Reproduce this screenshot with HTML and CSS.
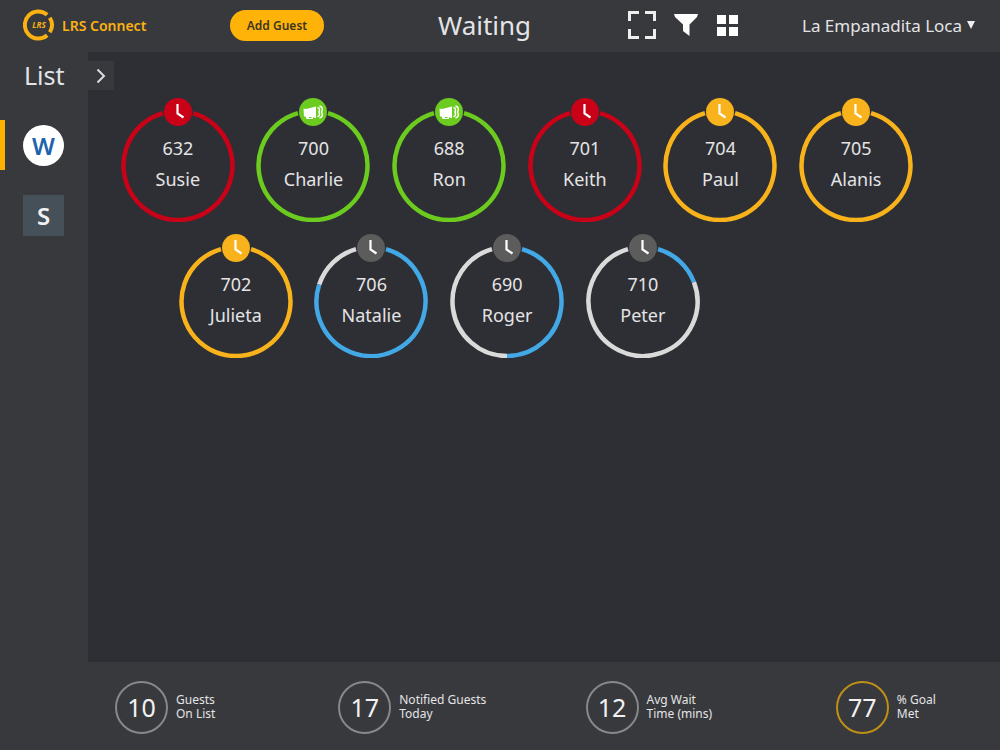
FILE: index.html
```html
<!DOCTYPE html>
<html lang="en">
<head>
    <meta charset="utf-8">
    <title>LRS Connect - Waiting</title>
    <link rel="stylesheet" href="styles.css">
</head>
<body>
    <!-- shared icons -->
    <svg class="defs" aria-hidden="true">
        <symbol id="clock" viewBox="0 0 28 28">
            <path d="M13.500 6v9.500l6 4" fill="none" stroke="#fff" stroke-width="2.200"/>
        </symbol>
        <symbol id="horn" viewBox="0 0 28 28">
            <path d="M4.500 10.500l2.500.5L17 8.500v11.500l-3-.7v1.700H7.500l-.8-2.500H5z" fill="#fff"/>
            <path d="M10 19.500h2.500" stroke="#6ccb1f" stroke-width="1"/>
            <path d="M18.500 9.500q3 .5 1.500 4.500 1.500 4-1.500 4.500M20.500 8q4.500 1.500 2 6 2.500 4.500-2 6" fill="none" stroke="#fff" stroke-width="1.500"/>
        </symbol>
    </svg>

    <header class="header">
        <a class="logo" href="#">
            <svg width="32" height="32" viewBox="0 0 32 32" aria-hidden="true">
                <path d="M24.200 5.800A13.500 13.500 0 1 0 24.200 26.200" fill="none" stroke="#fbb112" stroke-width="4"/>
                <path d="M26.800 8.800A13.500 13.500 0 0 1 26.800 23.200" fill="none" stroke="#fbb112" stroke-width="4"/>
                <text x="16" y="19" class="logo-mark">LRS</text>
            </svg>
            <span>LRS Connect</span>
        </a>
        <button class="add-guest" type="button">Add Guest</button>
        <h1>Waiting</h1>
        <div class="tools">
            <button type="button" aria-label="Full screen">
                <svg width="30" height="30" viewBox="0 0 30 30"><path d="M2.500 11V2.500H12M18 2.500h9.500V11M27.500 19v8.500H18M12 27.500H2.500V19" fill="none" stroke="#eee" stroke-width="3"/></svg>
            </button>
            <button type="button" aria-label="Filter">
                <svg width="24" height="24" viewBox="0 0 24 24"><path d="M0 1h24l-1 3-7.500 7.500V23L9 18v-6.500L1 4z" fill="#fff"/></svg>
            </button>
            <button type="button" aria-label="Grid view">
                <svg width="21" height="21" viewBox="0 0 21 21"><path d="M0 0h9v9H0zM12 0h9v9h-9zM0 12h9v9H0zM12 12h9v9h-9z" fill="#fff"/></svg>
            </button>
        </div>
        <div class="location">
            <select aria-label="Location">
                <option>La Empanadita Loca</option>
            </select>
            <svg width="8" height="8" viewBox="0 0 8 8" aria-hidden="true"><path d="M0 0h8L4 8z" fill="#eee"/></svg>
        </div>
    </header>

    <nav class="sidebar">
        <h2>List</h2>
        <div class="list-item active"><button class="waiting" type="button">W</button></div>
        <div class="list-item"><button class="seated" type="button">S</button></div>
    </nav>

    <main class="board">
        <button class="expand" type="button" aria-label="Expand list">
            <svg width="10" height="16" viewBox="0 0 10 16"><path d="M1.500 1.500L8 8l-6.500 6.500" fill="none" stroke="#ddd" stroke-width="2"/></svg>
        </button>
        <div class="guests" id="guests-top"></div>
        <div class="guests offset" id="guests-bottom"></div>
    </main>

    <footer class="stats">
        <div class="stat"><b>10</b><span>Guests<br>On List</span></div>
        <div class="stat"><b>17</b><span>Notified Guests<br>Today</span></div>
        <div class="stat"><b>12</b><span>Avg Wait<br>Time (mins)</span></div>
        <div class="stat goal"><b>77</b><span>% Goal<br>Met</span></div>
    </footer>
    <script src="script.js"></script>
</body>
</html>
```

FILE: styles.css
```css
* {
    box-sizing: border-box;
}
body {
    margin: 0;
    min-height: 100vh;
    display: grid;
    grid-template-columns: 88px 1fr;
    grid-template-rows: 52px 1fr 88px;
    background-color: #38393d;
    color: #e4e4e6;
    font-family: "Noto Sans", sans-serif;
}
button, select {
    font-family: inherit;
    color: inherit;
    border: none;
    background: none;
    padding: 0;
    cursor: pointer;
}
svg {
    display: block;
}
h1, h2 {
    margin: 0;
    font-weight: 400;
}
.defs {
    position: absolute;
    width: 0;
    height: 0;
}

/* header */
.header {
    grid-column: 1 / 3;
    display: flex;
    align-items: center;
    padding: 0 25px 2px 23px;
}
.logo {
    width: 207px;
    display: flex;
    align-items: center;
    gap: 7px;
    color: #fbb112;
    font-size: 14px;
    font-weight: 600;
    text-decoration: none;
}
.logo-mark {
    font-size: 8px;
    font-weight: 700;
    font-style: italic;
    text-anchor: middle;
    fill: #fbb112;
}
.add-guest {
    width: 94px;
    height: 31px;
    border-radius: 16px;
    background-color: #ffb309;
    color: #3c3524;
    font-size: 12px;
    font-weight: 600;
}
h1 {
    width: 189px;
    margin-left: 114px;
    font-size: 26px;
}
.tools {
    display: flex;
    align-items: center;
    gap: 19px;
}
.tools button:first-child {
    margin-right: -2px;
}
.location {
    margin-left: auto;
    display: flex;
    align-items: center;
    gap: 4px;
}
.location select {
    appearance: none;
    font-size: 17px;
}

/* sidebar */
.sidebar h2 {
    height: 48px;
    padding-left: 24px;
    font-size: 25px;
    line-height: 46px;
}
.list-item {
    height: 50px;
    margin-top: 20px;
    padding-left: 18px;
    border-left: 5px solid transparent;
    display: flex;
    align-items: center;
}
.list-item.active {
    border-color: #ffb000;
}
.list-item button {
    width: 41px;
    height: 41px;
    font-size: 24px;
    line-height: 41px;
    font-weight: 600;
}
.list-item .waiting {
    border-radius: 50%;
    background-color: #fff;
    color: #1c63ab;
}
.list-item .seated {
    background-color: #465059;
    color: #f2f2f2;
}

/* guest board */
.board {
    background-color: #2e2f34;
    padding: 9px 76px 0 22px;
}
.expand {
    width: 26px;
    height: 29px;
    margin-left: -22px;
    display: grid;
    place-items: center;
    background-color: #38393d;
}
.guests {
    display: grid;
    grid-template-columns: repeat(6, 1fr);
    margin-top: 8px;
}
.guests.offset {
    margin: 12px -58px 0 58px;
}
.guest {
    display: grid;
    justify-items: center;
    font-size: 18px;
    line-height: 31px;
}
.guest > svg, .guest > span {
    grid-area: 1 / 1;
}
.guest > span {
    padding-top: 35px;
}
.track, .progress {
    fill: none;
    stroke-width: 4.5;
}
.red {
    --color: #c90218;
}
.green {
    --color: #6ccb1f;
}
.yellow {
    --color: #f7b21c;
}
.blue {
    --color: #42a8e6;
}
.progress {
    stroke: var(--color);
}
.track {
    stroke: #dadada;
}
.badge {
    fill: var(--color);
}
.blue .badge {
    fill: #5c5c5c;
}

/* footer */
.stats {
    grid-column: 2;
    display: grid;
    grid-template-columns: 223fr 247fr 250fr 164fr;
    align-items: center;
    padding: 2px 0 0 27px;
}
.stat {
    display: flex;
    align-items: center;
    gap: 8px;
    font-size: 12px;
    line-height: 14px;
}
.stat b {
    width: 53px;
    height: 53px;
    border: 2px solid #87888a;
    border-radius: 50%;
    font-size: 25px;
    font-weight: 400;
    line-height: 48px;
    text-align: center;
    color: #f2f2f2;
}
.stat.goal b {
    border-color: #c08f17;
}
```

FILE: script.js
```javascript
// angles are degrees clockwise from the top, the badge covers the first and last few
var START = 16;
var END = 344;

var topRow = [
    { number: 632, name: "Susie", color: "red", icon: "clock", until: END },
    { number: 700, name: "Charlie", color: "green", icon: "horn", until: END },
    { number: 688, name: "Ron", color: "green", icon: "horn", until: END },
    { number: 701, name: "Keith", color: "red", icon: "clock", until: END },
    { number: 704, name: "Paul", color: "yellow", icon: "clock", until: END },
    { number: 705, name: "Alanis", color: "yellow", icon: "clock", until: END }
];
var bottomRow = [
    { number: 702, name: "Julieta", color: "yellow", icon: "clock", until: END },
    { number: 706, name: "Natalie", color: "blue", icon: "clock", until: 288 },
    { number: 690, name: "Roger", color: "blue", icon: "clock", until: 180 },
    { number: 710, name: "Peter", color: "blue", icon: "clock", until: 69 }
];

function arc(cls, from, to) {
    if (from >= to) return "";
    function point(deg) {
        var a = deg * Math.PI / 180;
        return (57 + 54.5 * Math.sin(a)).toFixed(2) + " " + (67.5 - 54.5 * Math.cos(a)).toFixed(2);
    }
    var large = to - from > 180 ? 1 : 0;
    return '<path class="' + cls + '" d="M' + point(from) + 'A54.5 54.5 0 ' + large + ' 1 ' + point(to) + '"/>';
}

function render(id, guests) {
    document.getElementById(id).innerHTML = guests.map(function (g) {
        return '<button type="button" class="guest ' + g.color + '">' +
            '<svg width="114" height="124" viewBox="0 0 114 124">' +
            arc("track", g.until, END) + arc("progress", START, g.until) +
            '<circle class="badge" cx="57" cy="14" r="14"/>' +
            '<use href="#' + g.icon + '" x="43" y="0" width="28" height="28"/></svg>' +
            '<span>' + g.number + '<br>' + g.name + '</span></button>';
    }).join("");
}

render("guests-top", topRow);
render("guests-bottom", bottomRow);
```
